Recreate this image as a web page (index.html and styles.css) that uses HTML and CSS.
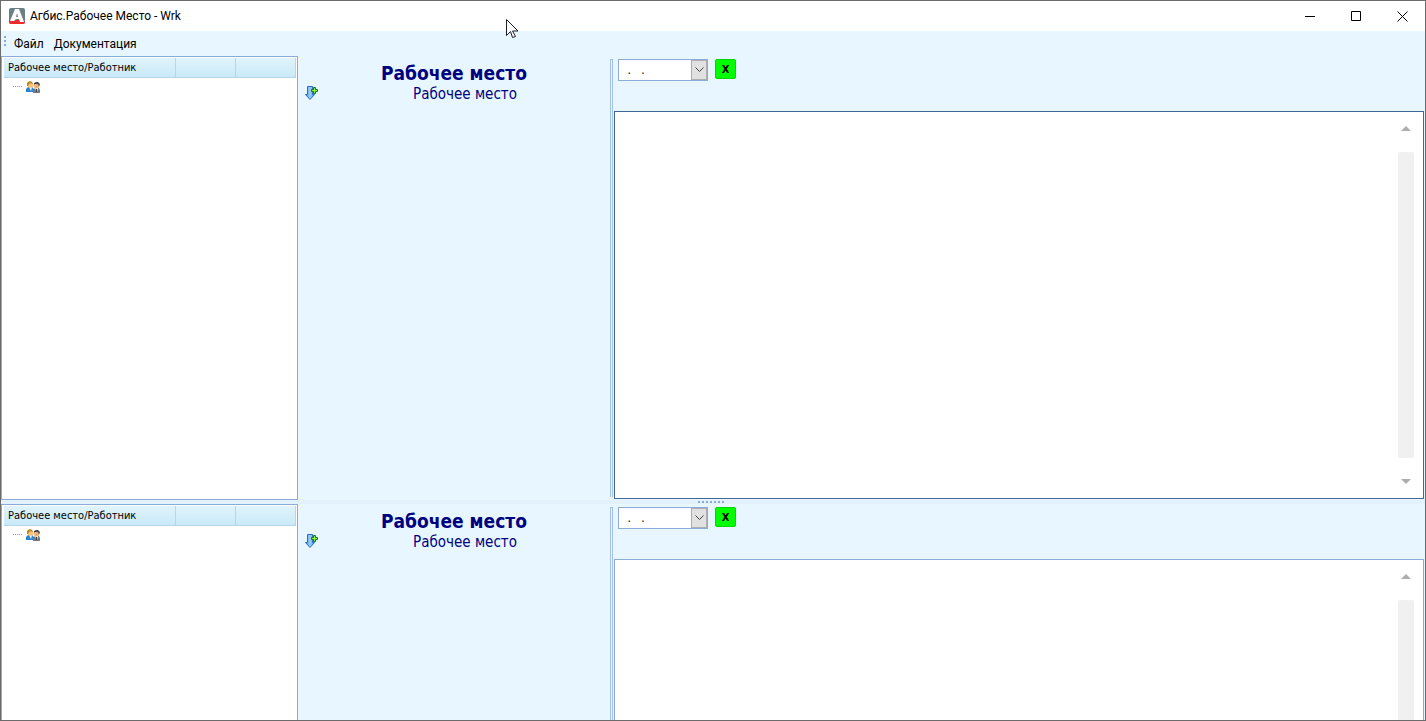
FILE: index.html
```html
<!DOCTYPE html>
<html lang="ru">
<head>
  <meta charset="UTF-8">
  <title>Агбис.Рабочее Место - Wrk</title>
  <link rel="stylesheet" href="styles.css">
</head>
<body>

  <!-- shared icons -->
  <svg class="sprite" aria-hidden="true">
    <symbol id="people" viewBox="0 0 14 12">
      <path d="M0 11V8l2-2h4l2 2v3z" fill="#2b86d0"/>
      <path d="M3 6h3l-1 4z" fill="#fff"/>
      <path d="M7 12V9l2-2h4l1 2v3z" fill="#777b82"/>
      <path d="M9 7h3l-1 4z" fill="#fff"/>
      <path d="M10 8h1v3h-1z" fill="#444"/>
      <circle cx="4.500" cy="4" r="3" fill="#f8c27c"/>
      <path d="M1 5V2l1-1 2-1 2 1 1 2-3-1-2 3z" fill="#b9851c"/>
      <circle cx="10.500" cy="5" r="2.500" fill="#efae70"/>
      <path d="M8 4V2l2-1h2l2 2-1 3-1-3H9z" fill="#484848"/>
    </symbol>
    <symbol id="add-down" viewBox="0 0 14 14">
      <defs>
        <linearGradient id="arrowFill" x2="1">
          <stop offset="0" stop-color="#3c8fe0"/>
          <stop offset=".5" stop-color="#9fd0f8"/>
          <stop offset="1" stop-color="#3f98ec"/>
        </linearGradient>
      </defs>
      <path d="M2.500.5h5v8h2l-4.500 5-4.500-5h2z" fill="url(#arrowFill)" stroke="#2470c4"/>
      <path d="M8.500 1.500h2v2h2v2h-2v2h-2v-2h-2v-2h2z" fill="#8cf03c" stroke="#12761a"/>
    </symbol>
  </svg>

  <div class="window">
    <header class="titlebar">
      <svg class="logo" viewBox="0 0 16 16">
        <rect width="16" height="16" rx="2" fill="#6b7f86"/>
        <path d="M0 11l3 2 10-2 3 3v0a2 2 0 0 1-2 2H2a2 2 0 0 1-2-2z" fill="#ee2b2b"/>
        <path d="M6 1h4l5 13h-4l-1-3H7l-2 2H1zM8 5L7 9h2z" fill="#fff" fill-rule="evenodd"/>
      </svg>
      <h1 class="title">Агбис.Рабочее Место - Wrk</h1>
      <div class="win-buttons">
        <button type="button" aria-label="Свернуть"><svg viewBox="0 0 11 11"><path d="M0 5.500h10"/></svg></button>
        <button type="button" aria-label="Развернуть"><svg viewBox="0 0 11 11"><path d="M.5.5h9v9h-9z"/></svg></button>
        <button type="button" aria-label="Закрыть"><svg viewBox="0 0 11 11"><path d="M.5.5l10 10M10.500.5l-10 10"/></svg></button>
      </div>
    </header>

    <nav class="menu">
      <span class="grip"></span>
      <a href="#">Файл</a>
      <a href="#">Документация</a>
    </nav>

    <main>
      <section class="pane active">
        <div class="tree">
          <table>
            <thead>
              <tr><th class="col-name">Рабочее место/Работник</th><th></th><th></th></tr>
            </thead>
          </table>
          <div class="node"><span class="branch"></span><svg class="people"><use href="#people"/></svg></div>
        </div>
        <div class="place">
          <button type="button" class="add-btn" aria-label="Добавить"><svg><use href="#add-down"/></svg></button>
          <h2>Рабочее место</h2>
          <p>Рабочее место</p>
        </div>
        <div class="v-splitter"></div>
        <div class="details">
          <div class="toolbar">
            <div class="date-box">
              <input type="text" value=" .   ." aria-label="Дата">
              <button type="button" aria-label="Календарь"><svg viewBox="0 0 9 6"><path d="M.5.5l4 4 4-4"/></svg></button>
            </div>
            <button type="button" class="excel-btn">X</button>
          </div>
          <div class="view">
            <div class="scrollbar">
              <svg viewBox="0 0 10 5"><path d="M5 0l5 5H0z"/></svg>
              <div class="thumb"></div>
              <svg viewBox="0 0 10 5"><path d="M0 0h10L5 5z"/></svg>
            </div>
          </div>
        </div>
      </section>

      <div class="h-splitter"><span></span></div>

      <section class="pane">
        <div class="tree">
          <table>
            <thead>
              <tr><th class="col-name">Рабочее место/Работник</th><th></th><th></th></tr>
            </thead>
          </table>
          <div class="node"><span class="branch"></span><svg class="people"><use href="#people"/></svg></div>
        </div>
        <div class="place">
          <button type="button" class="add-btn" aria-label="Добавить"><svg><use href="#add-down"/></svg></button>
          <h2>Рабочее место</h2>
          <p>Рабочее место</p>
        </div>
        <div class="v-splitter"></div>
        <div class="details">
          <div class="toolbar">
            <div class="date-box">
              <input type="text" value=" .   ." aria-label="Дата">
              <button type="button" aria-label="Календарь"><svg viewBox="0 0 9 6"><path d="M.5.5l4 4 4-4"/></svg></button>
            </div>
            <button type="button" class="excel-btn">X</button>
          </div>
          <div class="view">
            <div class="scrollbar">
              <svg viewBox="0 0 10 5"><path d="M5 0l5 5H0z"/></svg>
              <div class="thumb"></div>
              <svg viewBox="0 0 10 5"><path d="M0 0h10L5 5z"/></svg>
            </div>
          </div>
        </div>
      </section>
    </main>
  </div>

  <svg class="cursor" viewBox="0 0 13 20">
    <path d="M.5.5v16l4-4 2 6 3-1-3-5.500h5.500z" fill="#fff" stroke="#1a1a2a"/>
  </svg>

</body>
</html>
```
FILE: styles.css
```css
* {
  box-sizing: border-box;
}

body {
  margin: 0;
  font-family: "DejaVu Sans Condensed", "DejaVu Sans", sans-serif;
  font-size: 11px;
  color: #000;
}

button {
  border: none;
  padding: 0;
  background: none;
  font-family: inherit;
}

svg {
  display: block;
}

.sprite {
  position: absolute;
  width: 0;
  height: 0;
}

.window {
  height: 100vh;
  display: flex;
  flex-direction: column;
  overflow: hidden;
  border: 1px solid #6b6b6b;
  background-color: #e7f6ff;
}

/* title bar */
.titlebar {
  flex: none;
  display: flex;
  align-items: center;
  height: 30px;
  padding-left: 8px;
  background-color: #fff;
}

.logo {
  width: 16px;
  height: 16px;
}

.title {
  flex: 1;
  margin: 0 0 0 5px;
  font-family: Roboto, sans-serif;
  font-size: 12px;
  font-weight: normal;
}

.win-buttons {
  display: flex;
}

.win-buttons button {
  width: 46px;
  height: 30px;
  display: flex;
  align-items: center;
  justify-content: center;
}

.win-buttons svg {
  width: 11px;
  height: 11px;
  fill: none;
  stroke: #000;
}

/* menu */
.menu {
  flex: none;
  display: flex;
  align-items: center;
  height: 25px;
  padding-left: 3px;
  font-family: Roboto, sans-serif;
  font-size: 12px;
}

.menu a {
  margin-right: 10px;
  color: #000;
  text-decoration: none;
}

.grip {
  width: 2px;
  height: 10px;
  margin: 0 8px 6px 0;
  background: repeating-linear-gradient(#8ea9d6 0 2px, transparent 2px 4px);
}

main {
  flex: 1;
  min-height: 0;
}

.pane {
  display: flex;
  height: 444px;
}

/* workers tree */
.tree {
  flex: none;
  width: 297px;
  padding: 1px 1px 0 2px;
  border: 1px solid #8eaad6;
  background-color: #fff;
}

.tree table {
  width: 100%;
  table-layout: fixed;
  border-collapse: collapse;
}

.tree th {
  width: 60px;
  height: 19px;
  padding: 0 4px;
  border-right: 1px solid #b3d6ea;
  border-bottom: 1px solid #b3d6ea;
  background: linear-gradient(#e0f4fc, #c9e9f8);
  font-weight: normal;
  text-align: left;
  white-space: nowrap;
}

.tree th + th {
  border-left: 1px solid #fff;
}

.tree .col-name {
  width: auto;
}

.node {
  display: flex;
  align-items: center;
  height: 18px;
  padding-left: 9px;
}

.branch {
  width: 9px;
  margin-right: 4px;
  border-top: 1px dotted #999;
}

.people {
  width: 14px;
  height: 12px;
}

/* workplace caption */
.place {
  position: relative;
  flex: none;
  width: 312px;
  padding-top: 6px;
  color: #000080;
  text-align: center;
}

.place h2 {
  margin: 0;
  font-size: 19px;
  line-height: 22px;
}

.place p {
  margin: 0;
  padding-left: 22px;
  font-size: 15px;
  line-height: 20px;
}

.add-btn {
  position: absolute;
  left: 7px;
  top: 30px;
}

.add-btn svg {
  width: 14px;
  height: 14px;
}

.v-splitter {
  flex: none;
  width: 3px;
  margin: 3px 1px 3px 0;
  border: 1px solid #a3c1ea;
  border-bottom: none;
}

/* right part */
.details {
  flex: 1;
  display: flex;
  flex-direction: column;
  padding: 0 1px 1px 0;
}

.toolbar {
  flex: none;
  display: flex;
  align-items: flex-start;
  gap: 7px;
  height: 55px;
  padding: 3px 4px;
}

.date-box {
  display: flex;
  width: 90px;
  height: 22px;
  border: 1px solid #8eaad6;
  background-color: #fff;
}

.date-box input {
  flex: 1;
  min-width: 0;
  border: none;
  padding: 0 5px;
  background: none;
  font-family: inherit;
  font-size: 12px;
  white-space: pre;
}

.date-box button {
  width: 16px;
  display: flex;
  align-items: center;
  justify-content: center;
  border: 1px solid #adadad;
  background-color: #e1e1e1;
}

.date-box svg {
  width: 9px;
  height: 6px;
  fill: none;
  stroke: #444;
}

.excel-btn {
  width: 21px;
  height: 20px;
  border: 1px solid #00d800;
  border-radius: 2px;
  background-color: #00ff00;
  font-size: 11px;
  font-weight: bold;
}

.view {
  flex: 1;
  display: flex;
  justify-content: flex-end;
  padding: 14px 9px;
  border: 1px solid #8eaad6;
  background-color: #fff;
}

.active .view {
  border-color: #3f6798;
}

.scrollbar {
  display: flex;
  flex-direction: column;
  align-items: center;
  width: 16px;
}

.scrollbar svg {
  width: 10px;
  height: 5px;
  fill: #adadad;
}

.thumb {
  flex: 1;
  width: 16px;
  margin: 21px 0;
  border-radius: 2px;
  background-color: #f0f0f0;
}

.h-splitter {
  display: flex;
  justify-content: center;
  height: 4px;
  padding: 1px 4px 0 0;
  background-color: #e3f1fd;
}

.h-splitter span {
  width: 26px;
  height: 2px;
  background: repeating-linear-gradient(to right, #8ea9d6 0 2px, transparent 2px 4px);
}

/* mouse pointer over the window */
.cursor {
  position: absolute;
  left: 506px;
  top: 19px;
  width: 13px;
  height: 20px;
}
```
